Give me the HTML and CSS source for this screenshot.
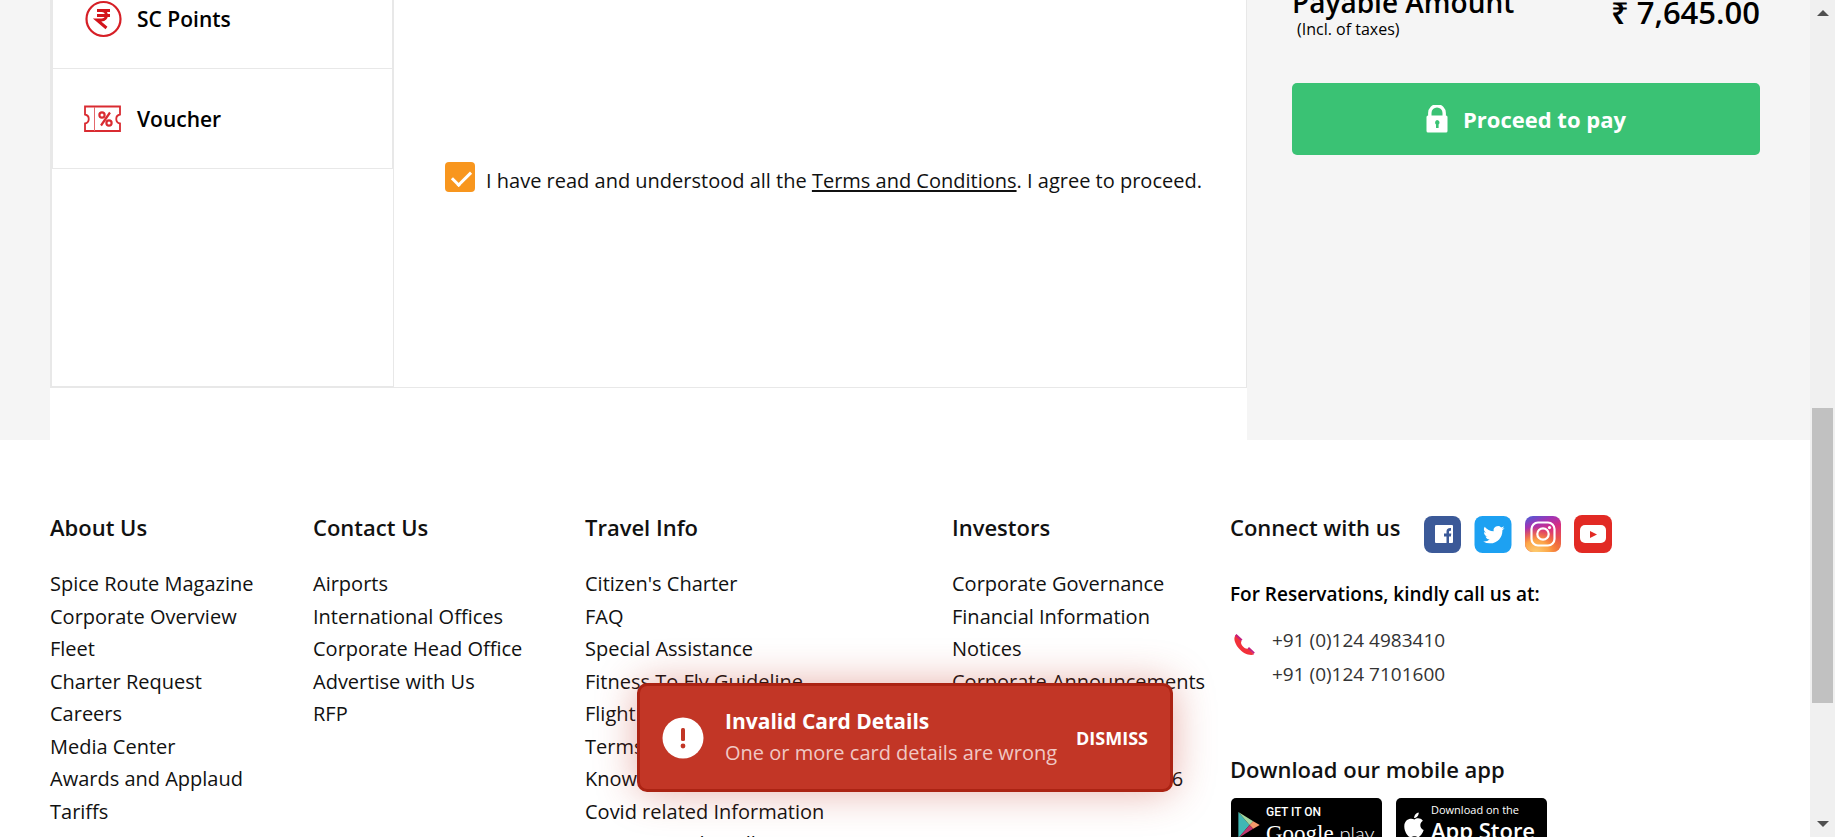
FILE: index.html
```html
<!DOCTYPE html>
<html lang="en">
<head>
<meta charset="utf-8">
<title>Payment</title>
<link rel="stylesheet" href="styles.css">
</head>
<body>
<div class="viewport">
  <div class="page">
    <main class="payment">
      <section class="panel">
        <div class="panel-box">
          <nav class="tabs">
            <button class="tab" type="button">
              <svg class="tab-icon" viewBox="0 0 38 38" aria-hidden="true"><circle cx="19.500" cy="19" r="17" fill="none" stroke="#d61f26" stroke-width="2.200"/><path d="M13 10.500h13M13 15.500h13M13 10.500h4.500c6.500 0 6.500 9.500 0 9.500H13l9.500 8" fill="none" stroke="#d3141b" stroke-width="3"/></svg>
              SC Points
            </button>
            <button class="tab" type="button">
              <svg class="tab-icon" viewBox="0 0 38 38" aria-hidden="true"><g fill="none" stroke="#d92b31" stroke-width="1.800"><path d="M1 6.500h35v8c-5 1-5 8 0 9v7.500H1v-7.500c5-1 5-8 0-9z"/><path d="M10.500 7v24" stroke-width="1" stroke="#e4686c"/><path d="M26 12.500l-9 13" stroke-width="2.200"/><circle cx="18" cy="15" r="2.600" stroke-width="2.200"/><circle cx="25" cy="23" r="2.600" stroke-width="2.200"/></g></svg>
              Voucher
            </button>
          </nav>
          <div class="consent">
            <input class="consent-check" type="checkbox" id="agree" checked>
            <label class="consent-text" for="agree">I have read and understood all the <a class="terms" href="#">Terms and Conditions</a>. I agree to proceed.</label>
          </div>
        </div>
      </section>
      <aside class="summary">
        <div class="amount-row">
          <div>
            <div class="amount-title">Payable Amount</div>
            <div class="amount-note">(Incl. of taxes)</div>
          </div>
          <div class="amount-value">₹ 7,645.00</div>
        </div>
        <button class="pay" type="button">
          <svg class="pay-lock" viewBox="0 0 22 28" aria-hidden="true"><path d="M3.800 11V8a7.200 7.200 0 0 1 14.400 0v3" fill="none" stroke="#fff" stroke-width="3.400"/><rect x="0.500" y="10.500" width="21" height="17" rx="1.500" fill="#fff"/><path d="M11 15a2.600 2.600 0 0 1 1.600 4.600V23H10v-3.500A2.600 2.600 0 0 1 11 15z" fill="#3ac274"/></svg>
          Proceed to pay
        </button>
      </aside>
    </main>
    <footer class="footer">
      <section>
        <h2 class="heading">About Us</h2>
        <ul class="links">
          <li><a href="#">Spice Route Magazine</a></li><li><a href="#">Corporate Overview</a></li><li><a href="#">Fleet</a></li><li><a href="#">Charter Request</a></li><li><a href="#">Careers</a></li><li><a href="#">Media Center</a></li><li><a href="#">Awards and Applaud</a></li><li><a href="#">Tariffs</a></li>
        </ul>
      </section>
      <section>
        <h2 class="heading">Contact Us</h2>
        <ul class="links">
          <li><a href="#">Airports</a></li><li><a href="#">International Offices</a></li><li><a href="#">Corporate Head Office</a></li><li><a href="#">Advertise with Us</a></li><li><a href="#">RFP</a></li>
        </ul>
      </section>
      <section>
        <h2 class="heading">Travel Info</h2>
        <ul class="links">
          <li><a href="#">Citizen's Charter</a></li><li><a href="#">FAQ</a></li><li><a href="#">Special Assistance</a></li><li><a href="#">Fitness To Fly Guideline</a></li><li><a href="#">Flight</a></li><li><a href="#">Terms</a></li><li><a href="#">Know</a></li><li><a href="#">Covid related Information</a></li><li><a href="#">Home Sample Collection</a></li>
        </ul>
      </section>
      <section>
        <h2 class="heading">Investors</h2>
        <ul class="links">
          <li><a href="#">Corporate Governance</a></li><li><a href="#">Financial Information</a></li><li><a href="#">Notices</a></li><li><a href="#">Corporate Announcements</a></li><li><a href="#">Policies</a></li><li><a href="#">Shareholding</a></li><li><a href="#">Disclosure under Reg. 46</a></li>
        </ul>
      </section>
      <section>
        <div class="connect">
          <h2 class="heading">Connect with us</h2>
          <div class="social">
            <a href="#" aria-label="Facebook"><svg viewBox="0 0 38 38"><rect width="37" height="37" y="1" rx="8" fill="#3b5998"/><rect x="11" y="10" width="18" height="18" rx="1" fill="#fff"/><path d="M22.500 28v-6.500H20v-3h2.500v-2c0-2.600 1.600-3.800 4.500-3.500v2.700c-1.500 0-2 .3-2 1.400v1.400h2.300l-.4 3H25V28z" fill="#3b5998"/></svg></a>
            <a href="#" aria-label="Twitter"><svg viewBox="0 0 38 38"><rect width="37" height="37" y="1" x="0.500" rx="8" fill="#1da1f2"/><path transform="translate(9.200 9) scale(.89)" d="M23.950 4.570a10 10 0 0 1-2.820.77 4.960 4.960 0 0 0 2.160-2.720c-.95.550-2 .95-3.130 1.180a4.920 4.920 0 0 0-8.380 4.480C7.690 8.090 4.070 6.130 1.640 3.160a4.920 4.920 0 0 0 1.520 6.570 4.900 4.900 0 0 1-2.230-.61v.06a4.920 4.920 0 0 0 3.950 4.830 5 5 0 0 1-2.210.08 4.940 4.940 0 0 0 4.600 3.420A9.870 9.870 0 0 1 0 19.540a14 14 0 0 0 7.550 2.210c9.050 0 14-7.500 14-13.980 0-.21 0-.42-.02-.63a9.940 9.940 0 0 0 2.420-2.570z" fill="#fff"/></svg></a>
            <a href="#" aria-label="Instagram"><svg viewBox="0 0 38 38"><defs><linearGradient id="igv" x1="0.100" y1="0" x2="0.500" y2="1"><stop offset="0" stop-color="#4f5bd5"/><stop offset=".25" stop-color="#a035b5"/><stop offset=".5" stop-color="#d62e82"/><stop offset=".8" stop-color="#e8504f"/><stop offset="1" stop-color="#ee6a45"/></linearGradient><radialGradient id="igw" cx=".3" cy="1.050" r=".75"><stop offset="0" stop-color="#fdd074"/><stop offset=".5" stop-color="#fca548"/><stop offset="1" stop-color="#fa7e1e" stop-opacity="0"/></radialGradient></defs><rect x="1" y="1" width="36" height="36" rx="8" fill="url(#igv)"/><rect x="1" y="1" width="36" height="36" rx="8" fill="url(#igw)"/><g fill="none" stroke="#fff" stroke-width="2.200"><rect x="7.500" y="7.500" width="23" height="23" rx="6.500"/><circle cx="19" cy="19" r="5.700"/></g><circle cx="25.500" cy="12.600" r="1.600" fill="#fff"/></svg></a>
            <a href="#" aria-label="YouTube"><svg viewBox="0 0 38 38"><rect width="38" height="38" rx="8" fill="#e22a24"/><rect x="6" y="10" width="26" height="18" rx="5" fill="#fff"/><path d="M16 16l7 3.500-7 3.500z" fill="#e22a24"/></svg></a>
          </div>
        </div>
        <h3 class="subheading">For Reservations, kindly call us at:</h3>
        <div class="phones">
          <svg class="phone-icon" viewBox="0 0 24 24" aria-hidden="true"><path d="M4.500 2.500C1 4.500 2 10.500 6.500 16s11 8 15.500 6.500l-5.500-6c-2 1-4.500-.5-6-2.500-1.300-1.600-2-3.500-1-5z" fill="#f2313a"/><path d="M4.500 2l6 5.500-1.500 1.500-6-5.500zM17 15l5.800 5.500-1.200 1.500-6-5.500z" fill="#c2207e"/></svg>
          <div class="phone-list">
            <a href="#">+91 (0)124 4983410</a>
            <a href="#">+91 (0)124 7101600</a>
          </div>
        </div>
        <h2 class="heading">Download our mobile app</h2>
        <div class="stores">
          <a class="store" href="#">
            <svg class="store-icon" viewBox="0 0 24 28" aria-hidden="true"><path d="M0 0v28l12-14z" fill="#3fb8b4"/><path d="M0 0l16 10-4 4z" fill="#a5d8a0"/><path d="M16 10l7 4-7 4-4-4z" fill="#f59a6a"/><path d="M0 28l16-10-4-4z" fill="#c1376f"/></svg>
            <span class="store-text"><span class="store-get">GET IT ON</span><span class="store-google">Google <span class="store-play">play</span></span></span>
          </a>
          <a class="store" href="#">
            <svg class="store-icon" viewBox="0 0 24 28" aria-hidden="true"><path d="M12 8c2-1.600 6.500-2.200 9 1.500-4 2.500-3.500 8 .9 10-1.500 4-3.700 7.500-6 7.500-1.500 0-2-.9-3.900-.9S9.500 27 8 27C4.500 27 1 20.500 1 15.500 1 8 7.500 6 12 8z" fill="#fff"/><path d="M11.500 6.500C11.500 3 14 1 16.500.5c.3 3-2 6-5 6z" fill="#fff"/></svg>
            <span class="store-text"><span class="store-small">Download on the</span><span class="store-apple">App Store</span></span>
          </a>
        </div>
      </section>
    </footer>
    <div class="toast" role="alert">
      <svg class="toast-icon" viewBox="0 0 42 42" aria-hidden="true"><circle cx="21" cy="21" r="20.500" fill="#fff"/><rect x="19" y="11" width="4" height="13" rx="1.500" fill="#c23626"/><circle cx="21" cy="29" r="2.400" fill="#c23626"/></svg>
      <div class="toast-body">
        <div class="toast-title">Invalid Card Details</div>
        <div class="toast-message">One or more card details are wrong</div>
      </div>
      <button class="dismiss" type="button">DISMISS</button>
    </div>
  </div>
  <div class="scrollbar" aria-hidden="true">
    <svg class="arrow" viewBox="0 0 12 6"><path d="M0 6l6-6 6 6z" fill="#505050"/></svg>
    <div class="track"><div class="thumb"></div></div>
    <svg class="arrow" viewBox="0 0 12 6"><path d="M0 0l6 6 6-6z" fill="#505050"/></svg>
  </div>
</div>
</body>
</html>
```
FILE: styles.css
```css
* { box-sizing: border-box; }
body { margin: 0; font-family: "Open Sans", "Noto Sans", sans-serif; font-size: 20px; color: #111; background: #fff; }
a { color: inherit; text-decoration: none; }
button { font: inherit; color: inherit; background: none; border: 0; padding: 0; margin: 0; cursor: pointer; }
h2, h3, ul { margin: 0; padding: 0; }

.viewport { display: flex; height: 100vh; overflow: hidden; }
.page { position: relative; flex: 1; min-width: 0; overflow: hidden; }

.payment { display: grid; grid-template-columns: minmax(0, 1197fr) minmax(0, 563fr); padding-left: 50px; background: #f5f5f5; overflow: hidden; }
.panel { background: #fff; padding-bottom: 52px; }
.panel-box { display: grid; grid-template-columns: 343px minmax(0, 1fr); border: 1px solid #e8e8e8; margin-top: -32px; height: 420px; }
.tabs { border: 1px solid #e8e8e8; border-top: 0; }
.tab { display: flex; align-items: center; gap: 15px; width: 100%; height: 100px; padding-left: 31px; border: 1px solid #e8e8e8; border-top: 0; font-size: 21px; font-weight: 600; color: #000; }
.tab-icon { width: 38px; height: 38px; }

.consent { display: flex; align-items: flex-start; gap: 11px; padding: 193px 0 0 51px; }
.consent-check { appearance: none; flex: none; width: 30px; height: 30px; margin: 0; border-radius: 4px; background: #f8961e; position: relative; }
.consent-check::after { content: ""; position: absolute; left: 11px; top: 5px; width: 8px; height: 16px; border: solid #fff; border-width: 0 3px 3px 0; transform: rotate(45deg); }
.consent-text { line-height: 38px; white-space: nowrap; }
.terms { text-decoration: underline; text-decoration-thickness: 2px; text-underline-offset: 2px; }

.summary { padding: 0 50px 0 45px; margin-top: -14px; color: #000; }
.amount-row { display: flex; justify-content: space-between; align-items: flex-start; }
.amount-title { font-size: 28px; font-weight: 600; line-height: 32px; }
.amount-note { font-size: 16px; line-height: 22px; padding-left: 5px; }
.amount-value { font-size: 31px; font-weight: 600; line-height: 52px; }
.pay { display: flex; align-items: center; justify-content: center; gap: 15px; width: 100%; height: 72px; margin-top: 43px; border-radius: 5px; background: #3ac274; color: #fff; font-size: 22px; font-weight: 700; }
.pay-lock { width: 22px; height: 28px; }

.footer { display: grid; grid-template-columns: minmax(0, 263fr) minmax(0, 272fr) minmax(0, 367fr) minmax(0, 278fr) minmax(0, 580fr); padding: 71px 0 0 50px; white-space: nowrap; }
.heading { font-size: 22px; font-weight: 600; line-height: 32px; }
.links { list-style: none; padding-top: 25px; line-height: 1.625; }
.connect { display: flex; align-items: flex-start; gap: 23px; }
.social { display: flex; gap: 12px; padding-top: 4px; }
.social svg { display: block; width: 38px; height: 38px; }
.subheading { padding-top: 25px; font-size: 19px; font-weight: 600; line-height: 32px; color: #000; }
.phones { display: flex; align-items: flex-start; gap: 16px; padding: 13px 0 62px 2px; color: #333; font-size: 19px; line-height: 34px; }
.phone-icon { width: 24px; height: 24px; margin-top: 9px; }
.phone-list { display: flex; flex-direction: column; }
.stores { display: flex; gap: 14px; padding: 13px 0 0 1px; }
.store { display: flex; align-items: flex-start; gap: 5px; width: 151px; height: 46px; padding-left: 7px; border-radius: 5px; background: #000; color: #fff; overflow: hidden; }
.store-icon { width: 23px; height: 26px; margin-top: 14px; flex: none; }
.store-text { display: flex; flex-direction: column; padding-top: 4px; line-height: 16px; }
.store-get { font-family: Roboto, sans-serif; font-size: 12px; font-weight: 500; line-height: 20px; }
.store-small { font-size: 11px; }
.store-google { font-family: "Liberation Serif", serif; font-size: 23px; line-height: 22px; }
.store-play { font-family: Lato, sans-serif; font-size: 20px; font-weight: 300; }
.store-apple { font-size: 22px; font-weight: 600; line-height: 24px; }

.toast { position: absolute; left: 50%; bottom: 45px; transform: translateX(-50%); display: flex; align-items: center; width: 536px; height: 109px; padding: 0 22px; border: 3px solid #ab2313; border-radius: 10px; background: #c23626; color: #fff; white-space: nowrap; box-shadow: 0 0 40px rgba(194, 54, 38, 0.4); }
.toast-icon { width: 42px; height: 42px; margin-right: 21px; flex: none; }
.toast-body { flex: 1; line-height: 32px; padding-bottom: 2px; }
.toast-title { font-size: 21px; font-weight: 700; }
.toast-message { color: #f0c8c4; }
.dismiss { font-size: 18px; font-weight: 700; }

.scrollbar { display: flex; flex-direction: column; align-items: center; flex: none; width: 25px; padding: 10px 2px; background: #f0f0f0; }
.arrow { width: 12px; height: 6px; }
.track { flex: 1; width: 21px; padding-top: 392px; }
.thumb { height: 295px; background: #c1c1c1; }
```
